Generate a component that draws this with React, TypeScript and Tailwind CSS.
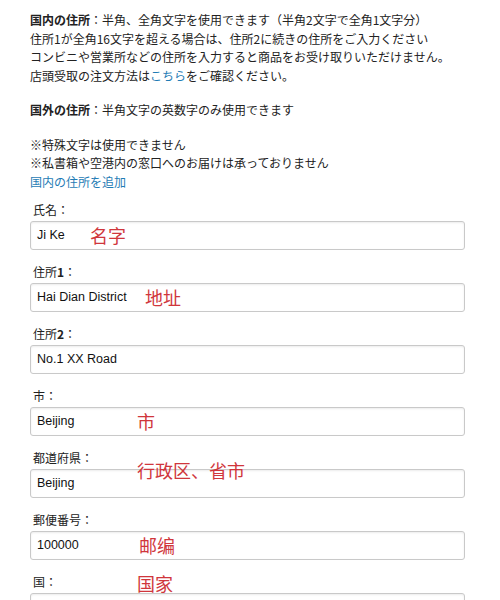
import React from 'react';

const jp = '"Noto Sans CJK JP", "Liberation Sans", sans-serif';
const cn = '"Noto Sans CJK SC", "Noto Sans CJK JP", sans-serif';

interface FieldProps {
  label: React.ReactNode;
  value: string;
  note?: string;
  // annotation placement, written out in full per field
  noteClass?: string;
}

function Field({ label, value, note, noteClass }: FieldProps) {
  return (
    <div className="relative mb-[14px]">
      <div className="text-[12px] leading-[16px] pl-[3px] mb-[3px] text-[#222]">{label}</div>
      <div className="h-[29px] w-[435px] border border-[#c9c9c9] rounded-[3px] bg-white shadow-[inset_0_1px_2px_rgba(0,0,0,0.08)] flex items-center pl-[6px]">
        <span className="text-[12.5px] text-[#111]" style={{ fontFamily: '"Liberation Sans", Arial, sans-serif' }}>
          {value}
        </span>
      </div>
      {note && (
        <span
          className={`absolute text-[18px] leading-[22px] text-[#d0363c] ${noteClass ?? ''}`}
          style={{ fontFamily: cn }}
        >
          {note}
        </span>
      )}
    </div>
  );
}

export default function App() {
  return (
    <div className="w-[500px] h-[600px] overflow-hidden bg-white pl-[30px] pt-[11px]" style={{ fontFamily: jp }}>
      <div className="text-[12px] leading-[18.5px] text-[#222]">
        <p>
          <b>国内の住所</b>：半角、全角文字を使用できます（半角2文字で全角1文字分）
        </p>
        <p>住所1が全角16文字を超える場合は、住所2に続きの住所をご入力ください</p>
        <p>コンビニや営業所などの住所を入力すると商品をお受け取りいただけません。</p>
        <p>
          店頭受取の注文方法は<span className="text-[#1f7cb5]">こちら</span>をご確認ください。
        </p>
        <p className="mt-[16px]">
          <b>国外の住所</b>：半角文字の英数字のみ使用できます
        </p>
        <p className="mt-[16px]">※特殊文字は使用できません</p>
        <p>※私書箱や空港内の窓口へのお届けは承っておりません</p>
        <p className="text-[#1f7cb5]">国内の住所を追加</p>
      </div>

      <div className="mt-[11px]">
        <Field label="氏名：" value="Ji Ke" note="名字" noteClass="left-[60px] top-[22px]" />
        <Field label={<>住所<b>1</b>：</>} value="Hai Dian District" note="地址" noteClass="left-[115px] top-[22px]" />
        <Field label={<>住所<b>2</b>：</>} value="No.1 XX Road" />
        <Field label="市：" value="Beijing" note="市" noteClass="left-[107px] top-[22px]" />
        <Field label="都道府県：" value="Beijing" note="行政区、省市" noteClass="left-[107px] top-[9px]" />
        <Field label="郵便番号：" value="100000" note="邮编" noteClass="left-[109px] top-[22px]" />
        <Field label="国：" value="" note="国家" noteClass="left-[107px] top-[-2px]" />
      </div>
    </div>
  );
}
